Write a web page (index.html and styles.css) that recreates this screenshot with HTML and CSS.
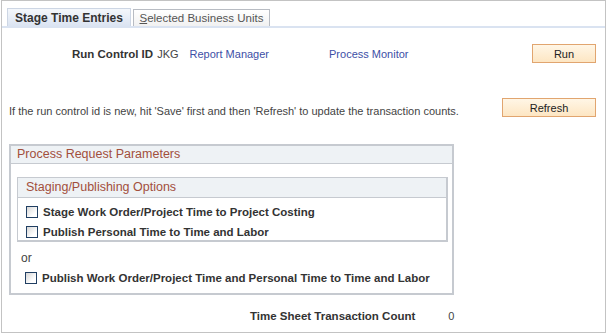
FILE: index.html
```html
<!DOCTYPE html>
<html lang="en">
<head>
<meta charset="utf-8" />
<title>Stage Time Entries</title>
<link rel="stylesheet" href="styles.css">
</head>
<body>
<div class="frame">

<!-- tabs: -->
<div class="tabs">
    <div class="tab active">Stage Time Entries</div>
    <div class="tab"><u>S</u>elected Business Units</div>
</div>

<!-- run control: -->
<div class="row run-row">
    <span class="label">Run Control ID</span>
    <span class="value">JKG</span>
    <a class="link report" href="#">Report Manager</a>
    <a class="link monitor" href="#">Process Monitor</a>
    <button class="btn run">Run</button>
</div>

<div class="row note-row">
    <span class="note">If the run control id is new, hit 'Save' first and then 'Refresh' to update the transaction counts.</span>
    <button class="btn refresh">Refresh</button>
</div>

<!-- parameters: -->
<div class="group outer">
    <div class="group-head">Process Request Parameters</div>
    <div class="group inner">
        <div class="group-head">Staging/Publishing Options</div>
        <label class="check first"><span class="box"></span>Stage Work Order/Project Time to Project Costing</label>
        <label class="check"><span class="box"></span>Publish Personal Time to Time and Labor</label>
    </div>
    <div class="or">or</div>
    <label class="check last"><span class="box"></span>Publish Work Order/Project Time and Personal Time to Time and Labor</label>
</div>

<div class="row count-row">
    <span class="label">Time Sheet Transaction Count</span>
    <span class="value">0</span>
</div>

</div>
</body>
</html>
```

FILE: styles.css
```css
* { box-sizing: border-box; }

body {
    margin: 0;
    font-family: "Liberation Sans", Arial, sans-serif;
    font-size: 11px;
    color: #444;
}

.frame {
    margin-left: 1px;
    width: 605px;
    height: 333px;
    border: 1px solid #c3c3c3;
}

/* tabs: */
.tabs {
    display: flex;
    align-items: flex-end;
    margin-top: 7px;
    padding-left: 5px;
    border-bottom: 2px solid #dae3f1;
}
.tab {
    width: 137px;
    height: 17px;
    line-height: 17px;
    white-space: nowrap;
    border: 1px solid #b8bcc3;
    border-bottom: 0;
    background: linear-gradient(#ffffff, #f1f1f1);
    font-size: 11.5px;
    color: #555;
    text-align: center;
}
.tab.active {
    width: 124px;
    height: 18px;
    line-height: 18px;
    margin-right: 2px;
    border-color: #cdd6e4;
    background: linear-gradient(#f4f7fb, #dbe4f2);
    font-size: 12px;
    font-weight: bold;
    color: #333;
}

/* rows: */
.row { display: flex; }
.label { font-weight: bold; font-size: 11.5px; color: #333; }
.link { color: #3d4fa6; text-decoration: none; }

.run-row {
    align-items: center;
    margin-top: 16px;
    padding-left: 70px;
    padding-right: 9px;
}
.run-row .value { margin-left: 4px; }
.report { margin-left: 11px; }
.monitor { margin-left: 60px; }

.btn {
    margin-left: auto;
    height: 19px;
    border: 1px solid #e1a56f;
    background: linear-gradient(#fff6e6, #fde6c3);
    font-family: "Liberation Sans", Arial, sans-serif;
    font-size: 11px;
    color: #222;
    padding: 0;
}
.run { width: 64px; }
.refresh { width: 94px; }

.note-row {
    align-items: flex-end;
    margin-top: 35px;
    padding-left: 7px;
    padding-right: 9px;
}

/* group boxes: */
.group {
    border: 1px solid #c6cad0;
}
.group-head {
    background: #eef2f5;
    border-bottom: 1px solid #c6cad0;
    color: #a24f3c;
    font-size: 12.5px;
    padding-left: 6px;
    white-space: nowrap;
}
.outer {
    margin: 27px 0 0 7px;
    width: 445px;
    height: 151px;
    border-width: 2px;
}
.outer > .group-head {
    height: 18px;
    line-height: 17px;
    border-bottom-width: 1px;
}
.inner {
    margin: 13px 0 0 6px;
    width: 431px;
    height: 65px;
    border-width: 1px 2px 2px 1px;
}
.inner > .group-head {
    height: 20px;
    line-height: 19px;
    padding-left: 8px;
}

.check {
    display: flex;
    align-items: center;
    font-weight: bold;
    font-size: 11.5px;
    color: #333;
    height: 13px;
    margin-left: 8px;
    white-space: nowrap;
}
.check.first { margin-top: 7px; }
.check + .check { margin-top: 7px; }
.check.last { margin-left: 14px; margin-top: 6px; }

.box {
    width: 12px;
    height: 12px;
    border: 1px solid #213f63;
    background: linear-gradient(135deg, #d6d6d6, #ffffff 70%);
    margin-right: 5px;
    flex: none;
}

.or {
    margin: 9px 0 0 10px;
    font-size: 12px;
    line-height: 14px;
}

.count-row {
    margin-top: 15px;
    padding-left: 248px;
}
.count-row .value { margin-left: 33px; }
```
